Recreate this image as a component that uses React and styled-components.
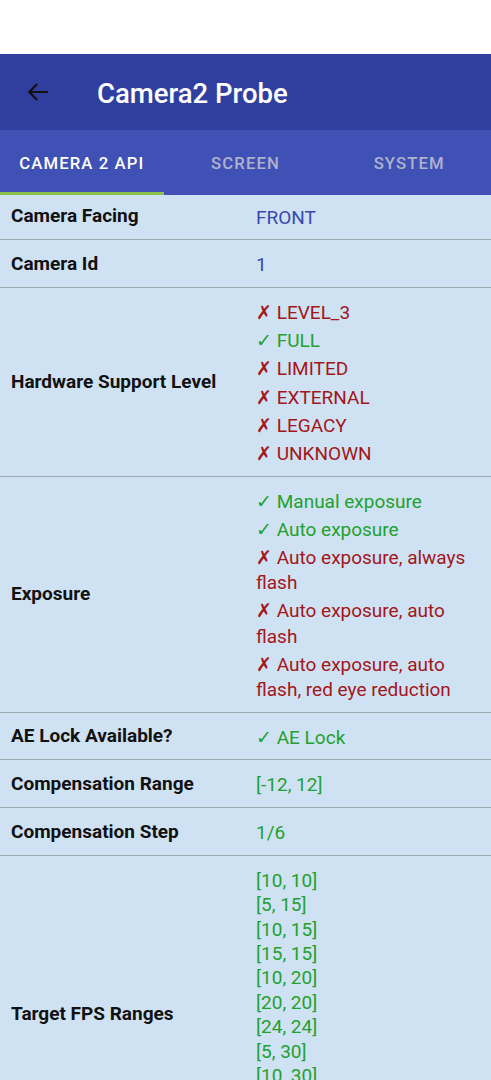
import React from 'react';
import styled, { createGlobalStyle } from 'styled-components';

const GlobalStyle = createGlobalStyle`
  html, body {
    margin: 0;
    padding: 0;
    background: #ffffff;
  }
  body {
    font-family: Roboto, 'Noto Sans', sans-serif;
  }
`;

const Screen = styled.div`
  width: 491px;
  height: 1080px;
  overflow: hidden;
  background: #ffffff;
`;

const StatusSpace = styled.div`
  height: 54px;
  background: #ffffff;
`;

const Toolbar = styled.div`
  height: 76px;
  background: #303f9f;
  display: flex;
  align-items: center;
  padding-left: 24px;
  gap: 45px;
`;

const Title = styled.h1`
  margin: 0;
  padding-top: 2px;
  color: #ffffff;
  font-size: 27.5px;
  font-weight: 500;
`;

const Tabs = styled.div`
  height: 65px;
  background: #3f51b5;
  display: grid;
  grid-template-columns: repeat(3, 1fr);
`;

const Tab = styled.div`
  display: flex;
  align-items: center;
  justify-content: center;
  font-size: 16.7px;
  font-weight: 500;
  letter-spacing: 1.1px;
  color: ${p => (p.active ? '#ffffff' : '#aeb2cc')};
  border-bottom: 3px solid ${p => (p.active ? '#8bc34a' : 'transparent')};
  box-sizing: border-box;
  padding-top: 4px;
`;

const List = styled.div`
  background: #cfe2f3;
`;

const Row = styled.div`
  display: grid;
  grid-template-columns: 245px 1fr;
  align-items: center;
  padding: ${p => (p.first ? '6.5px' : '9px')} 12px 9.5px 11px;
  border-bottom: 1.5px solid #9fa9b2;
`;

const Label = styled.div`
  font-size: 19px;
  font-weight: 700;
  color: #111111;
  line-height: 25px;
`;

const Values = styled.div`
  display: flex;
  flex-direction: column;
  padding-top: ${p => (p.tight ? '4px' : '0')};
`;

const Value = styled.div`
  font-size: 19px;
  margin-top: ${p => (p.tight ? '0' : '3px')};
  line-height: ${p => (p.tight ? '24.4px' : '25.2px')};
  color: ${p => ({ info: '#3949ab', ok: '#22a12e', bad: '#a3161a' }[p.kind])};
`;

const BackArrow = () => (
  <svg width="28" height="28" viewBox="0 0 24 24" fill="none">
    <path d="M20.5 12H4.5M11.3 5.2L4.5 12l6.8 6.8" stroke="#111111" strokeWidth="1.9" />
  </svg>
);

const rows = [
  { label: 'Camera Facing', values: [['info', 'FRONT']] },
  { label: 'Camera Id', values: [['info', '1']] },
  {
    label: 'Hardware Support Level',
    values: [
      ['bad', 'LEVEL_3'],
      ['ok', 'FULL'],
      ['bad', 'LIMITED'],
      ['bad', 'EXTERNAL'],
      ['bad', 'LEGACY'],
      ['bad', 'UNKNOWN'],
    ],
    marks: true,
  },
  {
    label: 'Exposure',
    values: [
      ['ok', 'Manual exposure'],
      ['ok', 'Auto exposure'],
      ['bad', 'Auto exposure, always flash'],
      ['bad', 'Auto exposure, auto flash'],
      ['bad', 'Auto exposure, auto flash, red eye reduction'],
    ],
    marks: true,
  },
  { label: 'AE Lock Available?', values: [['ok', 'AE Lock']], marks: true },
  { label: 'Compensation Range', values: [['ok', '[-12, 12]']] },
  { label: 'Compensation Step', values: [['ok', '1/6']] },
  {
    label: 'Target FPS Ranges',
    tight: true,
    values: [
      '[10, 10]', '[5, 15]', '[10, 15]', '[15, 15]', '[10, 20]', '[20, 20]',
      '[24, 24]', '[5, 30]', '[10, 30]', '[15, 30]', '[20, 30]', '[30, 30]',
    ].map(v => ['ok', v]),
  },
];

export default function App() {
  return (
    <Screen>
      <GlobalStyle />
      <StatusSpace />
      <Toolbar>
        <BackArrow />
        <Title>Camera2 Probe</Title>
      </Toolbar>
      <Tabs>
        <Tab active>CAMERA 2 API</Tab>
        <Tab>SCREEN</Tab>
        <Tab>SYSTEM</Tab>
      </Tabs>
      <List>
        {rows.map((r, i) => (
          <Row key={r.label} first={i === 0}>
            <Label>{r.label}</Label>
            <Values tight={r.tight}>
              {r.values.map(([kind, text]) => (
                <Value key={text} kind={kind} tight={r.tight}>
                  {r.marks ? `${kind === 'ok' ? '✓' : '✗'} ${text}` : text}
                </Value>
              ))}
            </Values>
          </Row>
        ))}
      </List>
    </Screen>
  );
}
